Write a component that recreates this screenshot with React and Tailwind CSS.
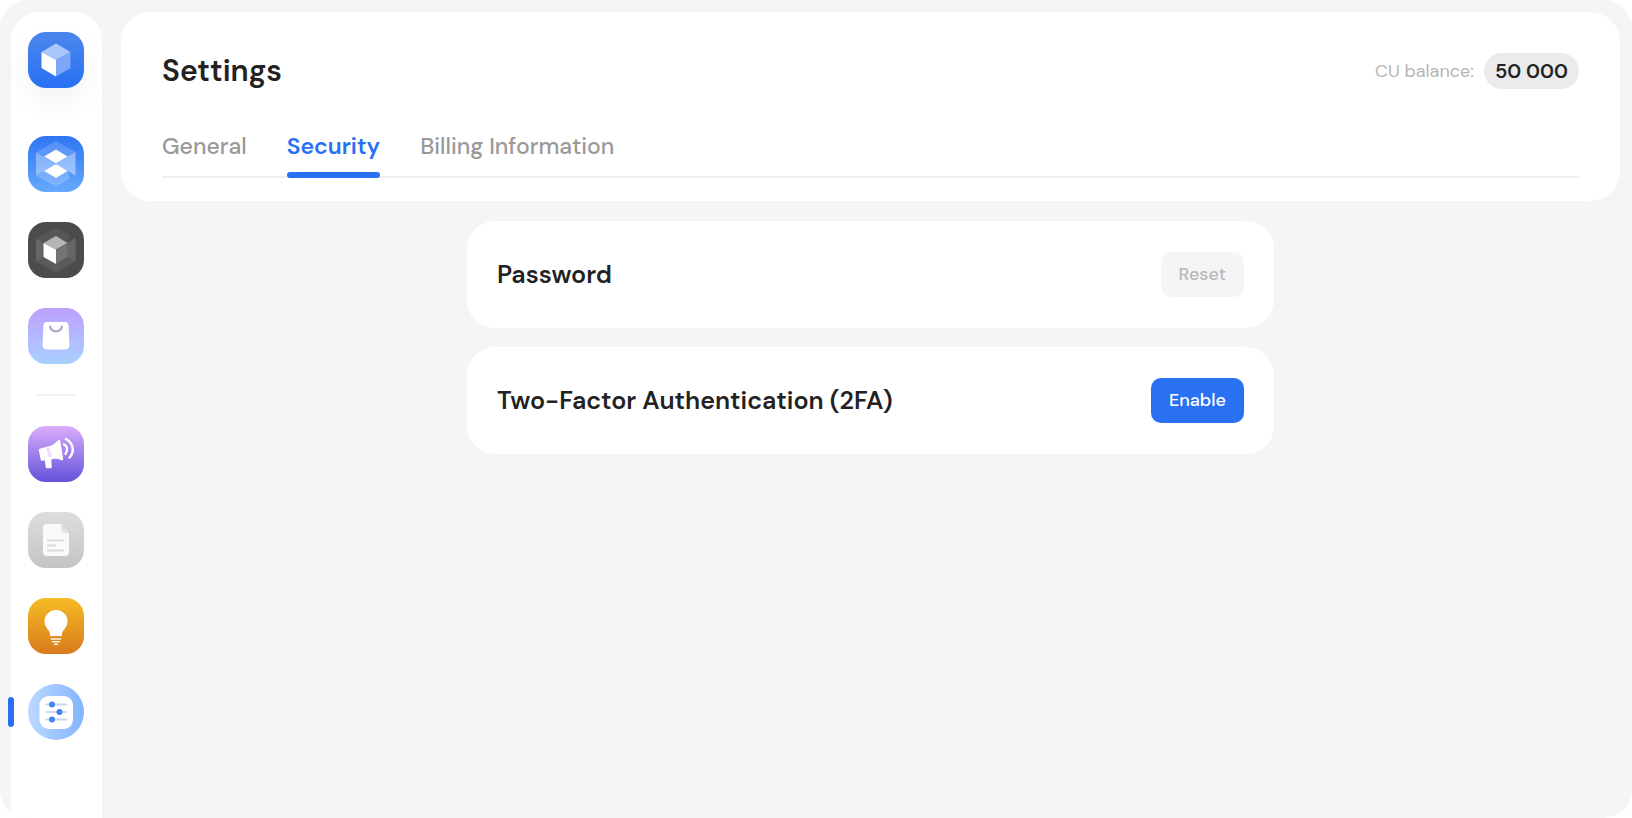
import React, { useState } from 'react';

const CubeIcon = () => (
  <svg viewBox="0 0 56 56" className="size-full" aria-hidden="true">
    <path d="M28 11.5 42.5 20 28 28 13.5 20Z" fill="#a9c6fb" />
    <path d="M13.5 20 28 28v16.5L13.5 36Z" fill="#fff" />
    <path d="M42.5 20v16L28 44.5V28Z" fill="#7ca6f8" />
  </svg>
);

const LayersIcon = () => (
  <svg viewBox="0 0 56 56" className="size-full" aria-hidden="true">
    <path d="M28 5 47.5 16 39.5 20.5 28 13.5 16 20.5 8 16.5Z" fill="#fff" fillOpacity=".16" />
    <path d="M8 16.5 16 21l12 7-12 7-8 4.500Z" fill="#fff" fillOpacity=".36" />
    <path d="M47.5 16v23.500L39.5 35 28 28l11.500-7.500Z" fill="#fff" fillOpacity=".42" />
    <path d="M8 39.5 16 35l12 7 11.500-7 2.500 7.500-14 8Z" fill="#fff" fillOpacity=".2" />
    <path d="M28 13.5 39.5 20.5 28 27.5 16 20.5Z" fill="#fff" />
    <path d="M28 28 39.5 35 28 42 16 35Z" fill="#fff" />
  </svg>
);

const DarkCubeIcon = () => (
  <svg viewBox="0 0 56 56" className="size-full" aria-hidden="true">
    <path d="M28 5 42 13 39.5 21 28 14 15.500 21 8 16.500Z" fill="#565657" />
    <path d="M8 16.500 15.500 21v14L8 39.500Z" fill="#666667" />
    <path d="M47.5 16v23.500L28 50.500 8 39.500 15.500 35 28 42l11.500-7V21Z" fill="#5b5b5c" />
    <path d="M47.5 16v23.500L39.500 35V21Z" fill="#666667" />
    <path d="M28 14 39.5 21 28 27.5 15.5 21Z" fill="#b5b5b5" />
    <path d="M15.5 21 28 27.5V42l-12.5-7Z" fill="#fff" />
    <path d="M39.5 21v14L28 42V27.5Z" fill="#737374" />
  </svg>
);

const BagIcon = () => (
  <svg viewBox="0 0 56 56" className="size-full" aria-hidden="true">
    <path d="M19 14h18a3.5 3.5 0 0 1 3.5 3.2l1 20a4 4 0 0 1-4 4.3h-19a4 4 0 0 1-4-4.3l1-20A3.5 3.5 0 0 1 19 14Z" fill="#fff" />
    <path d="M22 18.5c1.5 6.5 10.5 6.5 12 0" fill="none" stroke="#b1a4c9" strokeWidth="2.2" strokeLinecap="round" />
  </svg>
);

const MegaphoneIcon = () => (
  <svg viewBox="0 0 56 56" className="size-full" aria-hidden="true">
    <g fill="#fff" stroke="#fff" strokeLinejoin="round">
      <path d="m12 24 9-2.5c4-1 7-3 10-6.5l3 18c-4-1.5-7-2-10.5-1L14 33.5Z" strokeWidth="2.5" />
      <path d="m18 34 1 7h3.500l-.5-8Z" strokeWidth="2.5" />
    </g>
    <path d="M20 23 22 30" stroke="#eadcfc" strokeWidth="3" strokeLinecap="round" />
    <g fill="none" stroke="#fff" strokeWidth="2.4" strokeLinecap="round">
      <path d="M36 18.500c3.500 1.5 4 6 1.5 9.500" />
      <path d="M38 13c8 4.5 8.500 13 3.500 18.500" />
    </g>
  </svg>
);

const DocumentIcon = () => (
  <svg viewBox="0 0 56 56" className="size-full" aria-hidden="true">
    <path d="M19 12h14l8 9v19a4 4 0 0 1-4 4H19a4 4 0 0 1-4-4V16a4 4 0 0 1 4-4Z" fill="#fafafa" />
    <path d="M33 12v5a4 4 0 0 0 4 4h4Z" fill="#e4e4e4" />
    <path d="M20 28.5h15M20 33.5h7M20 38.5h15" stroke="#dadada" strokeWidth="2" strokeLinecap="round" />
  </svg>
);

const BulbIcon = () => (
  <svg viewBox="0 0 56 56" className="size-full" aria-hidden="true">
    <path d="M28 12a11.5 11.5 0 0 0-11.5 11.5c0 4.5 2.5 6.5 4.5 9.5 1.2 1.8 1 3.5 1.2 5h11.6c.2-1.5 0-3.2 1.2-5 2-3 4.500-5 4.500-9.500A11.500 11.500 0 0 0 28 12Z" fill="#fff" />
    <path d="M23.5 41h9M24.5 43.7h7M26.5 46.2h3" stroke="#fff" strokeOpacity=".9" strokeWidth="1.6" strokeLinecap="round" />
  </svg>
);

const SlidersIcon = () => (
  <svg viewBox="0 0 56 56" className="size-full" aria-hidden="true">
    <rect x="11.5" y="12" width="33.5" height="33" rx="9" fill="#fff" />
    <path d="M18 20.5h20.5M18 28h20.5M18 35.5h20.5" stroke="#c9daf5" strokeWidth="1.8" strokeLinecap="round" />
    <g fill="#4084ee">
      <circle cx="24" cy="20.5" r="3" />
      <circle cx="31.5" cy="28" r="3" />
      <circle cx="24" cy="35.5" r="3" />
    </g>
  </svg>
);

const apps = [
  { label: 'Layers', icon: LayersIcon, tile: 'rounded-[18px] bg-linear-to-b from-[#2f74f3] to-[#66a9fd]' },
  { label: 'Cube', icon: DarkCubeIcon, tile: 'rounded-[18px] bg-[#4c4c4d]' },
  { label: 'Store', icon: BagIcon, tile: 'rounded-[18px] bg-linear-to-b from-[#bd9ffe] to-[#a7d0ff]' },
];

const tools = [
  { label: 'Announcements', icon: MegaphoneIcon, tile: 'rounded-[18px] bg-linear-to-b from-[#dcacfb] to-[#6650d9]' },
  { label: 'Documents', icon: DocumentIcon, tile: 'rounded-[18px] bg-linear-to-b from-[#dedede] to-[#c4c4c4]' },
  { label: 'Ideas', icon: BulbIcon, tile: 'rounded-[18px] bg-linear-to-b from-[#f5bc27] to-[#d97a1b]' },
  { label: 'Settings', icon: SlidersIcon, tile: 'rounded-full bg-linear-to-r from-[#bcd8ff] to-[#82b4ff]', active: true },
];

const tabs = ['General', 'Security', 'Billing Information'];

const NavItem = ({ label, icon: Icon, tile, active }) => (
  <a
    href="#"
    aria-label={label}
    aria-current={active ? 'page' : undefined}
    className={`relative block size-14 ${tile}`}
  >
    <Icon />
    {active && <span className="absolute top-[13px] -left-5 h-[30px] w-[6px] rounded-full bg-[#2970f3]" />}
  </a>
);

const Sidebar = () => (
  <aside className="flex w-[91px] shrink-0 flex-col items-start rounded-t-[28px] bg-white pt-5 pl-[17px]">
    <a
      href="#"
      aria-label="Home"
      className="block size-14 rounded-[18px] bg-linear-to-b from-[#4a86ea] to-[#2870f5] shadow-[0_12px_28px_rgba(0,0,0,0.05)]"
    >
      <CubeIcon />
    </a>
    <nav className="mt-12 flex flex-col items-center gap-[30px]">
      {apps.map((item) => (
        <NavItem key={item.label} {...item} />
      ))}
      <hr className="h-[2px] w-10 border-0 bg-[#f3f3f4]" />
      {tools.map((item) => (
        <NavItem key={item.label} {...item} />
      ))}
    </nav>
  </aside>
);

const SettingCard = ({ title, children }) => (
  <section className="flex items-center justify-between rounded-[28px] bg-white px-[30px] py-[31px]">
    <h2 className="text-[25px] leading-8 font-semibold text-[#222]">{title}</h2>
    {children}
  </section>
);

const App = () => {
  const [activeTab, setActiveTab] = useState('Security');

  return (
    <div className="bg-white font-['DM_Sans','Inter',sans-serif]">
      <div className="flex min-h-screen gap-[19px] overflow-hidden rounded-[28px] bg-[#f4f5f7] pt-3 pr-3 pl-[11px]">
        <Sidebar />

        <main className="min-w-0 flex-1">
          <header className="rounded-[30px] bg-white px-[41px] pt-10 pb-[23px]">
            <div className="flex items-center justify-between">
              <h1 className="text-[30px] leading-[38px] font-semibold text-[#222]">Settings</h1>
              <p className="flex items-center gap-[10px] text-lg leading-6 text-[#b5b5b5]">
                CU balance:
                <span className="rounded-full bg-[#ebebed] px-[11px] py-[5px] text-xl leading-[26px] font-semibold text-[#222]">
                  50 000
                </span>
              </p>
            </div>

            <div role="tablist" className="mt-[38px] flex gap-10 border-b-2 border-[#eeeff1]">
              {tabs.map((tab) => (
                <button
                  key={tab}
                  type="button"
                  role="tab"
                  aria-selected={tab === activeTab}
                  onClick={() => setActiveTab(tab)}
                  className={`relative pb-3 text-[23px] leading-9 ${
                    tab === activeTab ? 'font-semibold text-[#2970f3]' : 'font-medium text-[#999]'
                  }`}
                >
                  {tab}
                  {tab === activeTab && (
                    <span className="absolute inset-x-0 -bottom-[2px] h-[6px] rounded-full bg-[#2970f3]" />
                  )}
                </button>
              ))}
            </div>
          </header>

          <div className="mx-auto mt-5 flex max-w-[807px] flex-col gap-[19px]">
            <SettingCard title="Password">
              <button
                type="button"
                disabled
                className="rounded-[10px] bg-[#f4f5f7] px-[18px] py-[10px] text-lg leading-[25px] font-medium text-[#b8b8b8]"
              >
                Reset
              </button>
            </SettingCard>
            <SettingCard title="Two-Factor Authentication (2FA)">
              <button
                type="button"
                className="rounded-[10px] bg-[#2970f3] px-[18px] py-[10px] text-lg leading-[25px] font-medium text-white"
              >
                Enable
              </button>
            </SettingCard>
          </div>
        </main>
      </div>
    </div>
  );
};

export default App;
